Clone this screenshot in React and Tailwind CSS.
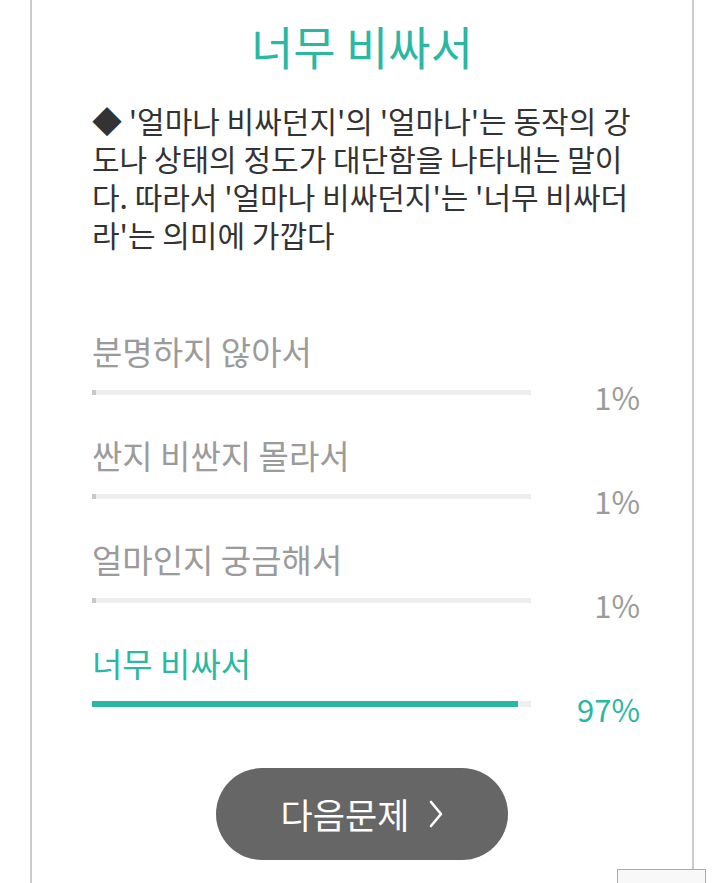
const OPTIONS = [
  { label: "분명하지 않아서", pct: 1 },
  { label: "싼지 비싼지 몰라서", pct: 1 },
  { label: "얼마인지 궁금해서", pct: 1 },
  { label: "너무 비싸서", pct: 97, answer: true },
];

function OptionRow({ label, pct, answer }) {
  return (
    <div className="h-[104px]">
      <div
        className={`text-[33px] leading-[40px] ${answer ? "text-[#2bb8a3]" : "text-[#9b9b9b]"}`}
      >
        {label}
      </div>
      <div className="flex items-start">
        <div className={`relative w-[439px] bg-[#eeeeee] ${answer ? "mt-[18px] h-[6px]" : "mt-[19px] h-[5px]"}`}>
          <div
            className={`absolute left-0 top-0 h-full ${answer ? "bg-[#2bb8a3]" : "bg-[#c8c8c8]"}`}
            style={{ width: `${pct}%` }}
          />
        </div>
        <div
          className={`flex-1 text-right text-[31px] leading-[36px] mt-[8px] ${answer ? "text-[#2bb8a3]" : "text-[#9b9b9b]"}`}
        >
          {pct}%
        </div>
      </div>
    </div>
  );
}

export default function App() {
  return (
    <div
      className="relative h-[883px] overflow-hidden bg-white"
      style={{ fontFamily: '"Noto Sans CJK KR", "Noto Sans", sans-serif' }}
    >
      <div className="ml-[30px] w-[664px] h-full border-x-2 border-[#cccccc] pl-[60px] pr-[52px]">
        {/* Answer title */}
        <h1 className="pt-[17px] text-center text-[46px] leading-[56px] text-[#2bb8a3] -ml-[60px] -mr-[52px]">
          너무 비싸서
        </h1>

        {/* Explanation */}
        <p className="mt-[28px] text-[30px] leading-[38px] text-[#333333] whitespace-nowrap">
          ◆ '얼마나 비싸던지'의 '얼마나'는 동작의 강<br />
          도나 상태의 정도가 대단함을 나타내는 말이<br />
          다. 따라서 '얼마나 비싸던지'는 '너무 비싸더<br />
          라'는 의미에 가깝다
        </p>

        {/* Results */}
        <div className="mt-[78px]">
          {OPTIONS.map((o) => (
            <OptionRow key={o.label} {...o} />
          ))}
        </div>

        {/* Next button */}
        <div className="mt-[21px] flex justify-center -ml-[60px] -mr-[52px]">
          <button className="flex h-[92px] w-[292px] items-center justify-center gap-[20px] rounded-full bg-[#666666] text-[35px] text-white">
            <span>다음문제</span>
            <svg width="14" height="28" viewBox="0 0 14 28" fill="none">
              <polyline points="2,2 12,14 2,26" stroke="white" strokeWidth="2.6" strokeLinecap="round" strokeLinejoin="round" />
            </svg>
          </button>
        </div>
      </div>

      {/* floating widget edge */}
      <div className="absolute left-[617px] top-[869px] h-[30px] w-[89px] border border-[#aaaaaa] bg-[#f8f8f8]" />
    </div>
  );
}
